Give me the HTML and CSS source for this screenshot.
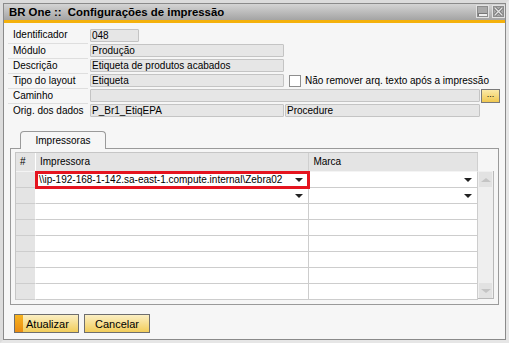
FILE: index.html
```html
<!DOCTYPE html>
<html>
<head>
<meta charset="utf-8">
<link rel="stylesheet" href="styles.css">
</head>
<body>
<div class="window">
  <div class="frame">
    <div class="titlebar">
      <span class="title">BR One ::&nbsp; Configurações de impressão</span>
      <div class="tbtns">
        <span class="tbtn"><span class="minbar"></span></span>
        <span class="tbtn">
          <svg width="11" height="11" viewBox="0 0 11 11"><path d="M2 2 L9 9 M9 2 L2 9" stroke="#6e6e6e" stroke-width="3"/><path d="M2 2 L9 9 M9 2 L2 9" stroke="#e4e4e4" stroke-width="1.4"/></svg>
        </span>
      </div>
    </div>
    <div class="accent"></div>
    <div class="content">
      <div class="form">
        <div class="row">
          <div class="label">Identificador</div>
          <div class="field w-id">048</div>
        </div>
        <div class="row">
          <div class="label">Módulo</div>
          <div class="field w-std">Produção</div>
        </div>
        <div class="row">
          <div class="label">Descrição</div>
          <div class="field w-std">Etiqueta de produtos acabados</div>
        </div>
        <div class="row">
          <div class="label">Tipo do layout</div>
          <div class="field w-std">Etiqueta</div>
          <span class="check"></span>
          <span class="checklabel">Não remover arq. texto após a impressão</span>
        </div>
        <div class="row">
          <div class="label">Caminho</div>
          <div class="field w-long"></div>
          <div class="browse">...</div>
        </div>
        <div class="row">
          <div class="label">Orig. dos dados</div>
          <div class="field w-std">P_Br1_EtiqEPA</div>
          <div class="field w-proc">Procedure</div>
        </div>
      </div>

      <div class="tabs"><div class="tab">Impressoras</div></div>
      <div class="panel">
        <div class="grid">
          <div class="table">
            <div class="trow head">
              <div class="c num">#</div>
              <div class="c imp">Impressora</div>
              <div class="c marca">Marca</div>
            </div>
            <div class="trow">
              <div class="c num"></div>
              <div class="c imp sel">\\ip-192-168-1-142.sa-east-1.compute.internal\Zebra02<span class="dd"></span></div>
              <div class="c marca"><span class="dd"></span></div>
            </div>
            <div class="trow">
              <div class="c num"></div>
              <div class="c imp"><span class="dd"></span></div>
              <div class="c marca"><span class="dd"></span></div>
            </div>
            <div class="trow"><div class="c num"></div><div class="c imp"></div><div class="c marca"></div></div>
            <div class="trow"><div class="c num"></div><div class="c imp"></div><div class="c marca"></div></div>
            <div class="trow"><div class="c num"></div><div class="c imp"></div><div class="c marca"></div></div>
            <div class="trow"><div class="c num"></div><div class="c imp"></div><div class="c marca"></div></div>
            <div class="trow"><div class="c num"></div><div class="c imp"></div><div class="c marca"></div></div>
            <div class="trow"><div class="c num"></div><div class="c imp"></div><div class="c marca"></div></div>
          </div>
          <div class="scroll">
            <div class="sbtn"><span class="up"></span></div>
            <div class="sbtn"><span class="down"></span></div>
          </div>
        </div>
      </div>

      <div class="buttons">
        <div class="btn primary"><span class="stripe"></span><span class="btext">Atualizar</span></div>
        <div class="btn"><span class="btext">Cancelar</span></div>
      </div>
    </div>
  </div>
</div>
</body>
</html>
```

FILE: styles.css
```css
* { box-sizing: border-box; }
html, body { margin: 0; padding: 0; background: #e4e4e4; }
body { font-family: "Liberation Sans", Arial, sans-serif; font-size: 10px; color: #000; }

.window {
  width: 509px;
  height: 343px;
  border: 3px solid #dcdcdc;
  border-right-color: #e6e6e6;
  border-bottom-color: #e6e6e6;
}
.frame {
  height: 100%;
  border: 1px solid #8a8a8a;
  background: #f6f6f6;
  display: flex;
  flex-direction: column;
}
.titlebar {
  height: 16px;
  background: linear-gradient(#d4d4d4, #a4a4a4);
  display: flex;
  align-items: center;
  justify-content: space-between;
  padding: 0 0 0 5px;
}
.title { font-weight: bold; font-size: 11.4px; }
.tbtns { display: flex; gap: 3px; align-self: flex-start; margin-top: 1px; }
.tbtn {
  width: 13px; height: 13px;
  background: #a9a9a9;
  border: 1px solid #e2e2e2;
  outline: 1px solid #8c8c8c;
  outline-offset: -2px;
  display: flex; align-items: center; justify-content: center;
}
.minbar { width: 8px; height: 2px; background: #eeeeee; margin-top: 7px; box-shadow: 0 0 0 1px #777; }
.accent { height: 3px; background: #f4b10c; }

.content { flex: 1; padding: 5px 0 0 4px; display: flex; flex-direction: column; }

.form { display: flex; flex-direction: column; }
.row { display: flex; align-items: center; height: 15px; }
.row + .row .label { border-top: 1px solid #dedede; }
.label { width: 80px; height: 15px; padding-left: 5px; line-height: 14px; margin-right: 2px; }
.field {
  height: 13px;
  background: #e6e6e6;
  border: 1px solid #c4c4c4;
  border-radius: 1px;
  line-height: 11px;
  padding-left: 1px;
  white-space: nowrap;
  overflow: hidden;
}
.w-id { width: 49px; }
.w-std { width: 194px; }
.w-long { width: 390px; }
.w-proc { width: 195px; margin-left: 1px; }
.check {
  width: 12px; height: 12px;
  background: #fff;
  border: 1px solid #8e8e8e;
  margin-left: 5px;
}
.checklabel { margin-left: 4px; white-space: nowrap; }
.browse {
  width: 19px; height: 14px;
  margin-left: 1px;
  border: 1px solid #7a7a7a;
  background: linear-gradient(#fbeaa8, #f0c850);
  font-size: 9px;
  line-height: 9px;
  text-align: center;
}

.tabs { display: flex; margin-top: 13px; padding-left: 12px; }
.tab {
  width: 86px; height: 18px;
  border: 1px solid #9a9a9a;
  border-bottom: none;
  border-radius: 4px 4px 0 0;
  background: #f6f6f6;
  text-align: center;
  line-height: 17px;
  position: relative;
  z-index: 1;
}
.panel {
  margin: -1px 6px 0 2px;
  height: 157px;
  border: 1px solid #9a9a9a;
  padding: 3px 4px 0 4px;
}
.grid { display: flex; }
.table { width: 463px; border-left: 1px solid #c6c6c6; border-top: 1px solid #c6c6c6; }
.trow { display: flex; height: 16px; }
.trow.head { height: 19px; }
.c { border-right: 1px solid #cdcdcd; border-bottom: 1px solid #cdcdcd; background: #fff; position: relative; white-space: nowrap; }
.head .c { background: #e4e4e4; border-right-color: #cfcfcf; border-bottom-color: #f4f4f4; line-height: 18px; padding-left: 4px; }
.num { width: 20px; background: #e4e4e4; border-right-color: #fff; border-bottom-color: #cdcdcd; }
.head .num { padding-left: 4px; border-right-color: #fff; }
.imp { width: 274px; }
.marca { width: 169px; }
.sel {
  outline: 3px solid #e5141f;
  outline-offset: -2px;
  padding-left: 3px;
  line-height: 15px;
  z-index: 2;
}
.dd {
  position: absolute;
  right: 5px; top: 6px;
  width: 0; height: 0;
  border-left: 4px solid transparent;
  border-right: 4px solid transparent;
  border-top: 4px solid #222;
}

.scroll {
  width: 17px;
  margin-top: 19px;
  height: 128px;
  background: #efefef;
  border-right: 1px solid #b8b8b8;
  border-bottom: 1px solid #b8b8b8;
  display: flex; flex-direction: column; justify-content: space-between;
  padding: 1px 1px 0 1px;
}
.sbtn { height: 15px; background: #e2e2e2; display: flex; align-items: center; justify-content: center; }
.up { border-left: 5px solid transparent; border-right: 5px solid transparent; border-bottom: 4px solid #c4c4c4; }
.down { border-left: 5px solid transparent; border-right: 5px solid transparent; border-top: 4px solid #c4c4c4; }

.buttons { display: flex; gap: 5px; margin: 9px 0 0 6px; }
.btn {
  height: 19px;
  border: 1px solid #6e6e6e;
  background: linear-gradient(#fbefc4, #f2cd5a);
  display: flex; align-items: center;
  width: 66px;
  justify-content: center;
  font-size: 11px;
}
.btn.primary { width: 65px; justify-content: flex-start; }
.stripe { width: 8px; height: 100%; background: linear-gradient(#f7b420, #ea8c12); }
.primary .btext { margin-left: 3px; }
```
